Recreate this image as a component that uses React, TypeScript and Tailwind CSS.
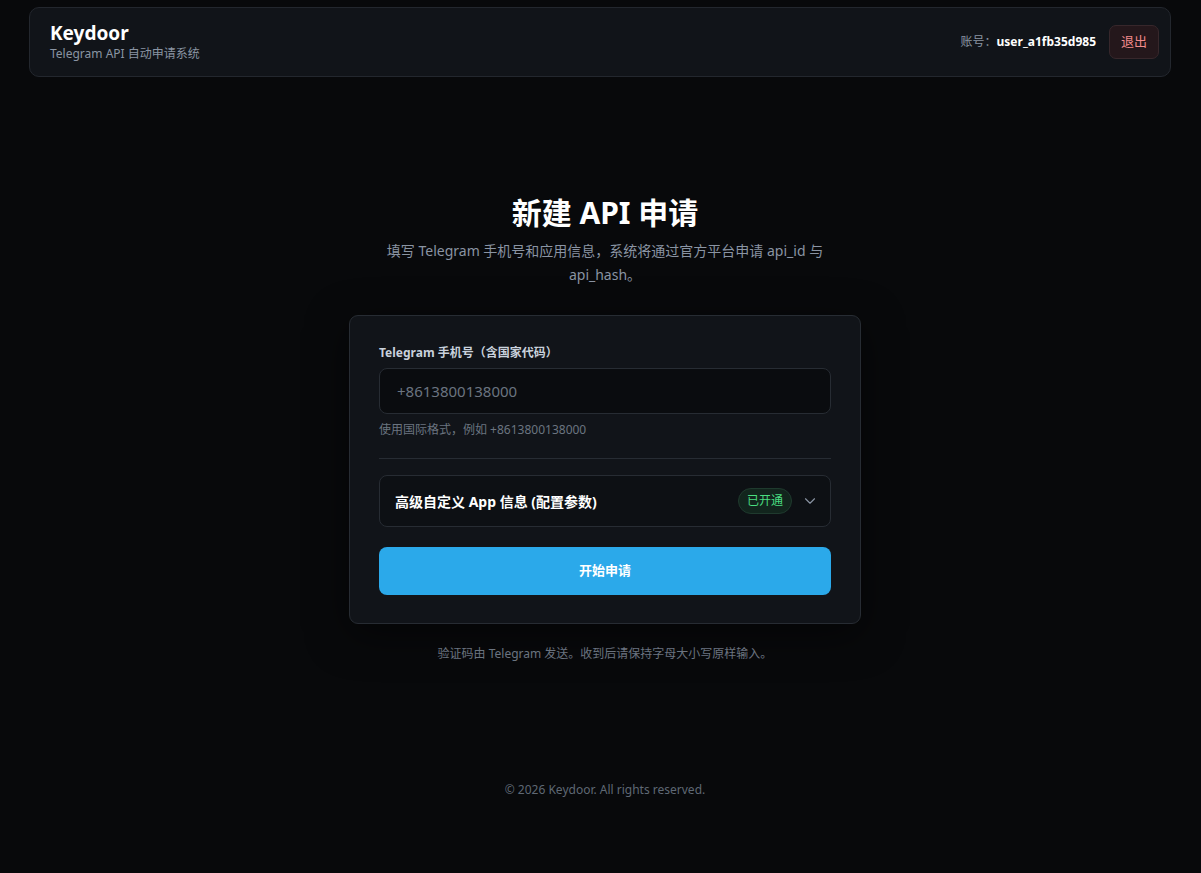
import React from 'react';
import { ChevronDown } from 'lucide-react';

export default function App() {
  return (
    <div
      className="min-h-screen bg-[#08090b] text-white flex flex-col"
      style={{ fontFamily: '"Noto Sans", "Noto Sans CJK SC", sans-serif' }}
    >
      {/* Header */}
      <div className="pl-[29px] pr-[30px] pt-[7px]">
        <header className="h-[70px] rounded-[10px] border border-[#23272e] bg-[#111419] pl-5 pr-[11px] flex items-center justify-between">
          <div>
            <div className="text-[19px] font-bold leading-[24px] text-white">Keydoor</div>
            <div className="text-[12px] leading-[18px] text-[#8a94a3]">Telegram API 自动申请系统</div>
          </div>
          <div className="flex items-center gap-[13px]">
            <span className="text-[12px] text-[#8a94a3]">
              账号：<span className="font-bold text-white">user_a1fb35d985</span>
            </span>
            <button className="h-[34px] w-[50px] rounded-[7px] border border-[#37272b] bg-[#24171b] text-[13px] text-[#f28b8b]">
              退出
            </button>
          </div>
        </header>
      </div>

      {/* Main */}
      <main className="flex flex-col items-center pt-[116px] pl-[9px]">
        <h1 className="text-[30px] font-bold leading-[40px] text-white">新建 API 申请</h1>
        <p className="mt-[6px] w-[450px] text-center text-[14px] leading-[24px] text-[#8a94a3]">
          填写 Telegram 手机号和应用信息，系统将通过官方平台申请 api_id 与 api_hash。
        </p>

        <div className="mt-[28px] w-[512px] rounded-[9px] border border-[#272c33] bg-[#111419] px-[29px] pt-[28px] pb-[28px] shadow-[0_10px_40px_rgba(0,0,0,0.5)]">
          <label className="block text-[12px] font-bold leading-[18px] text-[#c9d1dc]">
            Telegram 手机号（含国家代码）
          </label>
          <input
            type="text"
            placeholder="+8613800138000"
            className="mt-[6px] w-full h-[46px] rounded-[8px] border border-[#272c33] bg-[#0a0c0f] px-[17px] text-[15px] text-white placeholder:text-[#6b7480] outline-none"
          />
          <div className="mt-[7px] text-[12px] leading-[18px] text-[#6b7480]">使用国际格式，例如 +8613800138000</div>

          <div className="mt-[19px] h-px bg-[#272c33]" />

          <div className="mt-[16px] h-[52px] rounded-[8px] border border-[#272c33] bg-[#0d1014] pl-[15px] pr-[11px] flex items-center justify-between">
            <span className="text-[14px] font-bold text-white">高级自定义 App 信息 (配置参数)</span>
            <div className="flex items-center gap-[9px]">
              <span className="h-[26px] px-[8px] rounded-full border border-[#1f3a2e] bg-[#12251d] text-[12px] leading-[24px] text-[#4ade80]">
                已开通
              </span>
              <ChevronDown className="w-[18px] h-[18px] text-[#8a94a3]" strokeWidth={1.5} />
            </div>
          </div>

          <button className="mt-[20px] w-full h-[48px] rounded-[8px] bg-[#2ba9ea] text-[13px] font-bold text-white">
            开始申请
          </button>
        </div>

        <p className="mt-[21px] text-[12px] leading-[18px] text-[#6b7480]">
          验证码由 Telegram 发送。收到后请保持字母大小写原样输入。
        </p>

        <footer className="mt-[118px] text-[12px] leading-[18px] text-[#5f6874]">
          © 2026 Keydoor. All rights reserved.
        </footer>
      </main>
    </div>
  );
}
